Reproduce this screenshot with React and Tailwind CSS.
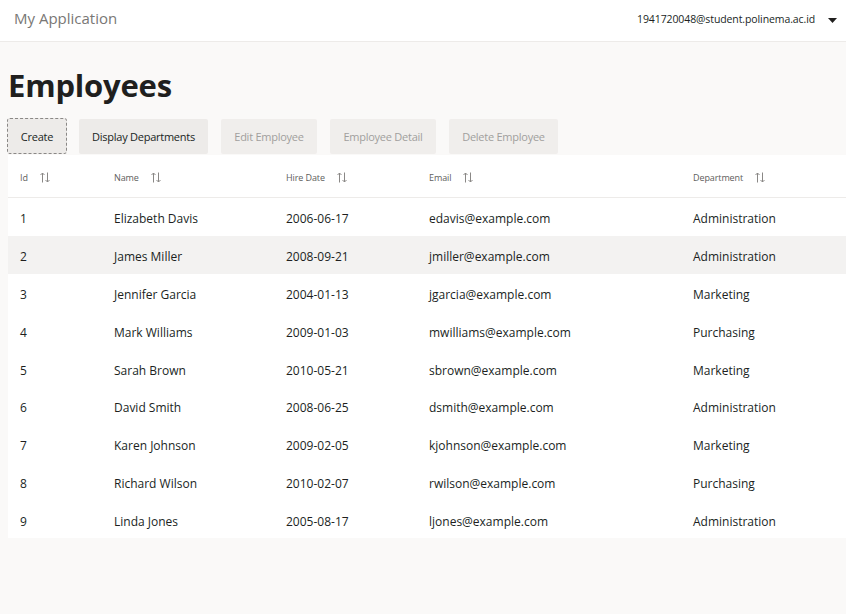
import React from "react";

const rows = [
  [1, "Elizabeth Davis", "2006-06-17", "edavis@example.com", "Administration"],
  [2, "James Miller", "2008-09-21", "jmiller@example.com", "Administration"],
  [3, "Jennifer Garcia", "2004-01-13", "jgarcia@example.com", "Marketing"],
  [4, "Mark Williams", "2009-01-03", "mwilliams@example.com", "Purchasing"],
  [5, "Sarah Brown", "2010-05-21", "sbrown@example.com", "Marketing"],
  [6, "David Smith", "2008-06-25", "dsmith@example.com", "Administration"],
  [7, "Karen Johnson", "2009-02-05", "kjohnson@example.com", "Marketing"],
  [8, "Richard Wilson", "2010-02-07", "rwilson@example.com", "Purchasing"],
  [9, "Linda Jones", "2005-08-17", "ljones@example.com", "Administration"],
];

const cols = [
  { label: "Id", w: "w-[94px]" },
  { label: "Name", w: "w-[172px]" },
  { label: "Hire Date", w: "w-[143px]" },
  { label: "Email", w: "w-[264px]" },
  { label: "Department", w: "w-[165px]" },
];

function SortIcon() {
  return (
    <svg width="10" height="11" viewBox="0 0 10 11" className="ml-[12px] text-[#8a8886]" fill="none" stroke="currentColor" strokeWidth="1">
      <path d="M2.5 10.5V1M0.5 3L2.5 1L4.5 3" />
      <path d="M7.5 0.5V10M5.5 8L7.5 10L9.5 8" />
    </svg>
  );
}

export default function App() {
  const font = { fontFamily: '"Open Sans", "Noto Sans", sans-serif' };
  const btn = "flex h-[35px] items-center justify-center rounded-[2px] pt-[2px] text-[11px] tracking-[-0.25px]";
  return (
    <div className="min-h-[614px] w-[846px] overflow-hidden bg-[#faf9f8] text-[#323130]" style={font}>
      <header className="flex h-[42px] items-center justify-between border-b border-[#edebe9] bg-white">
        <div className="pb-[4px] pl-[14px] text-[15px] text-[#797775]">My Application</div>
        <div className="flex items-center pb-[1px] pr-[9px]">
          <span className="text-[10.5px] tracking-[-0.1px] text-[#201f1e]">1941720048@student.polinema.ac.id</span>
          <svg width="9" height="5" viewBox="0 0 9 5" className="ml-[13px]">
            <path d="M0 0H9L4.5 5Z" fill="#201f1e" />
          </svg>
        </div>
      </header>

      <h1 className="mt-[23px] pl-[8px] text-[31px] font-bold leading-[40px] tracking-[-0.2px] text-[#201f1e]">Employees</h1>

      <div className="mt-[13px] flex items-center pl-[7px]">
        <button className={`${btn} h-[36px] w-[60px] rounded-[3px] border border-dashed border-[#8a8886] bg-[#edebe9] text-[#201f1e]`}>
          Create
        </button>
        <button className={`${btn} ml-[12px] w-[129px] bg-[#edebe9] text-[#201f1e]`}>
          Display Departments
        </button>
        <button className={`${btn} ml-[13px] w-[96px] bg-[#f0eeec] text-[#a19f9d]`}>
          Edit Employee
        </button>
        <button className={`${btn} ml-[13px] w-[106px] bg-[#f0eeec] text-[#a19f9d]`}>
          Employee Detail
        </button>
        <button className={`${btn} ml-[13px] w-[109px] bg-[#f0eeec] text-[#a19f9d]`}>
          Delete Employee
        </button>
      </div>

      <div className="ml-[8px] mt-[1px] bg-white">
        <div className="flex h-[43px] items-center border-b border-[#edebe9] pt-[3px]">
          {cols.map((c) => (
            <div key={c.label} className={`${c.w} flex items-center pl-[12px] text-[9px] tracking-[-0.1px] text-[#605e5c]`}>
              {c.label}
              <SortIcon />
            </div>
          ))}
        </div>
        {rows.map((r, i) => (
          <div key={r[0]} className={`flex h-[37.8px] items-center pt-[5px] ${i === 1 ? "bg-[#f3f2f1]" : "bg-white"}`}>
            {r.map((v, j) => (
              <div key={j} className={`${cols[j].w} pl-[12px] text-[12px] text-[#201f1e]`}>
                {v}
              </div>
            ))}
          </div>
        ))}
      </div>
    </div>
  );
}
